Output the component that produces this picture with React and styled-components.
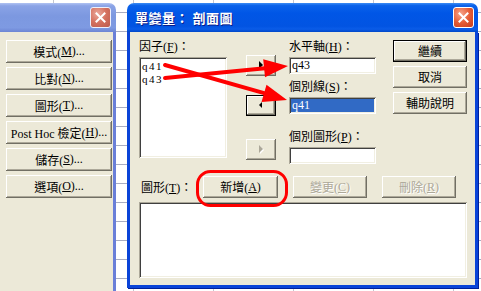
import React from 'react';
import styled, { createGlobalStyle, css } from 'styled-components';

const UI_FONT = `"Liberation Serif", "Noto Sans CJK TC", serif`;

const Global = createGlobalStyle`
  html, body { margin: 0; padding: 0; background: #fff; }
  body { font-family: ${UI_FONT}; font-size: 12px; }
`;

const Desktop = styled.div`
  position: relative;
  width: 481px;
  height: 291px;
  overflow: hidden;
  box-sizing: border-box;
  padding-top: 3px;
  display: flex;
  align-items: flex-start;
  background-color: #fff;
  background-image: linear-gradient(to right, #c4c6cf 1px, transparent 1px),
    linear-gradient(to bottom, #a9adc2 1px, transparent 1px);
  background-size: 80px 100%, 100% 19px;
  background-position: 53px 0, 0 12px;
  font-family: ${UI_FONT};
  font-size: 12px;
  color: #000;
`;

const Window = styled.div`
  flex: none;
  display: flex;
  flex-direction: column;
  width: ${(p) => p.$w}px;
  height: ${(p) => p.$h}px;
  margin-right: ${(p) => p.$mr || 0}px;
`;

const activeTitle = `linear-gradient(180deg, #3c8cf4 0%, #0b62ea 9%, #0056e6 35%, #0254e2 80%, #0a5ce8 90%, #0047c8 100%)`;
const inactiveTitle = `linear-gradient(180deg, #b0c2f2 0%, #8aa3e6 10%, #7c98e0 45%, #7e9ae2 85%, #6c85d4 100%)`;

const TitleBar = styled.div`
  flex: none;
  height: 29px;
  box-sizing: border-box;
  display: flex;
  align-items: center;
  padding: 0 ${(p) => (p.$active ? 4 : 5)}px 0 8px;
  border-radius: ${(p) => (p.$cut ? '0 7px 0 0' : '7px 7px 0 0')};
  background: ${(p) => (p.$active ? activeTitle : inactiveTitle)};
`;

const TitleText = styled.span`
  color: #fff;
  font-family: "Noto Sans CJK TC", sans-serif;
  font-weight: 700;
  font-size: 13px;
  letter-spacing: 0.5px;
  text-shadow: 1px 1px #0a1c8a;
  white-space: nowrap;
`;

const CloseBtn = styled.div`
  margin-left: auto;
  width: 21px;
  height: 21px;
  box-sizing: border-box;
  border: 1px solid ${(p) => (p.$active ? '#fff' : '#eef0fb')};
  border-radius: 3px;
  display: flex;
  align-items: center;
  justify-content: center;
  background: ${(p) =>
    p.$active
      ? 'radial-gradient(circle at 35% 30%, #f6a58c 0%, #e55c36 50%, #c53c1c 100%)'
      : 'radial-gradient(circle at 35% 30%, #eaa89c 0%, #d4705e 50%, #bb5a4c 100%)'};
`;

const Frame = styled.div`
  flex: 1;
  box-sizing: border-box;
  background: #ece9d8;
  border: 3px solid ${(p) => (p.$active ? '#0a44d8' : '#6a7fd8')};
  border-top: none;
  ${(p) => p.$cut && css`border-left: none;`}
  ${(p) => p.$active && css`box-shadow: 1px 1px 0 #00209a;`}
`;

const LeftBody = styled(Frame)`
  display: flex;
  flex-direction: column;
  gap: 4px;
  padding: 8px 1px 0 6px;
`;

const bevel = css`
  box-shadow: inset -1px -1px #716f64, inset 1px 1px #fff, inset -2px -2px #aca899;
`;
const defaultBevel = css`
  box-shadow: inset 0 0 0 1px #000, inset -2px -2px #716f64, inset 2px 2px #fff,
    inset -3px -3px #aca899;
`;

const Btn = styled.button`
  flex: none;
  box-sizing: border-box;
  display: flex;
  align-items: center;
  justify-content: center;
  padding: 0;
  border: none;
  margin: 0;
  margin-top: ${(p) => p.$mt || 0}px;
  width: ${(p) => (p.$w ? `${p.$w}px` : 'auto')};
  height: ${(p) => p.$h || 22}px;
  background: #ece9d8;
  font-family: ${UI_FONT};
  font-size: 12px;
  color: ${(p) => (p.disabled ? '#aca899' : '#000')};
  text-shadow: ${(p) => (p.disabled ? '1px 1px #fff' : 'none')};
  white-space: nowrap;
  ${(p) => (p.$default ? defaultBevel : bevel)}
`;

const U = styled.span`
  text-decoration: underline;
`;

const Dialog = styled(Frame)`
  display: flex;
  flex-direction: column;
  padding: 7px 8px 7px 9px;
`;

const TopSection = styled.div`
  display: flex;
  align-items: flex-start;
`;

const Col = styled.div`
  flex: none;
  display: flex;
  flex-direction: column;
  width: ${(p) => p.$w}px;
  margin-left: ${(p) => p.$ml || 0}px;
  padding-top: ${(p) => p.$pt || 0}px;
  gap: ${(p) => p.$gap || 0}px;
`;

const Label = styled.div`
  height: 16px;
  line-height: 16px;
  margin-bottom: 2px;
  white-space: nowrap;
`;

const Group = styled.div`
  display: flex;
  flex-direction: column;
  margin-top: ${(p) => p.$mt || 0}px;
`;

const sunken = css`
  box-sizing: border-box;
  background: #fff;
  box-shadow: inset 1px 1px #aca899, inset -1px -1px #fff, inset 2px 2px #3f3f3f,
    inset -2px -2px #f1efe2;
`;

const Field = styled.div`
  ${sunken}
  height: 17px;
  padding: 2px 2px;
  font-size: 12px;
  line-height: 13px;
`;

const FieldValue = styled.div`
  height: 13px;
  padding-left: 1px;
  background: ${(p) => (p.$selected ? '#316ac5' : 'transparent')};
  color: ${(p) => (p.$selected ? '#fff' : '#000')};
`;

const ListBox = styled.div`
  ${sunken}
  width: ${(p) => p.$w}px;
  height: ${(p) => p.$h}px;
  padding: 3px 3px;
  font-size: 11px;
  letter-spacing: 1.5px;
  line-height: 13px;
  margin-top: ${(p) => p.$mt || 0}px;
`;

const ListItem = styled.div`
  white-space: nowrap;
`;

const BottomRow = styled.div`
  display: flex;
  align-items: center;
  margin-top: 12px;
  padding-left: 2px;
`;

const BottomLabel = styled.div`
  width: 62px;
  flex: none;
  white-space: nowrap;
`;

const BtnRow = styled.div`
  display: flex;
  gap: 15px;
`;

const Overlay = styled.svg`
  position: absolute;
  left: 0;
  top: 0;
  pointer-events: none;
`;

const CloseX = () => (
  <svg width="11" height="11" viewBox="0 0 11 11">
    <path d="M1.5 1.5 L9.5 9.5 M9.5 1.5 L1.5 9.5" stroke="#fff" strokeWidth="2" strokeLinecap="square" />
  </svg>
);

const Tri = ({ dir, disabled }) => (
  <svg width="6" height="9" viewBox="0 0 6 9">
    {disabled && <polygon points="2,1 6,5 2,9" fill="#fff" />}
    {dir === 'right' ? (
      <polygon points="1,0 5,4 1,8" fill={disabled ? '#aca899' : '#000'} />
    ) : (
      <polygon points="4,1 1,4 4,7" fill="#000" />
    )}
  </svg>
);

export default function App() {
  return (
    <>
      <Global />
      <Desktop>
        <Window $w={116} $h={300} $mr={11}>
          <TitleBar $cut>
            <CloseBtn>
              <CloseX />
            </CloseBtn>
          </TitleBar>
          <LeftBody $cut>
            <Btn $h={23}>模式(<U>M</U>)...</Btn>
            <Btn $h={23}>比對(<U>N</U>)...</Btn>
            <Btn $h={23}>圖形(<U>T</U>)...</Btn>
            <Btn $h={23}>Post Hoc 檢定(<U>H</U>)...</Btn>
            <Btn $h={23}>儲存(<U>S</U>)...</Btn>
            <Btn $h={23}>選項(<U>O</U>)...</Btn>
          </LeftBody>
        </Window>

        <Window $w={351} $h={285}>
          <TitleBar $active>
            <TitleText>單變量： 剖面圖</TitleText>
            <CloseBtn $active>
              <CloseX />
            </CloseBtn>
          </TitleBar>
          <Dialog $active>
            <TopSection>
              <Col $w={88}>
                <Label>因子(<U>F</U>)：</Label>
                <ListBox $w={88} $h={101}>
                  <ListItem>q41</ListItem>
                  <ListItem>q43</ListItem>
                </ListBox>
              </Col>
              <Col $w={30} $ml={19}>
                <Btn $w={30} $h={21} $mt={16}>
                  <Tri dir="right" />
                </Btn>
                <Btn $w={30} $h={21} $mt={19} $default>
                  <Tri dir="left" />
                </Btn>
                <Btn $w={30} $h={21} $mt={23} disabled>
                  <Tri dir="right" disabled />
                </Btn>
              </Col>
              <Col $w={87} $ml={13}>
                <Group>
                  <Label>水平軸(<U>H</U>)：</Label>
                  <Field>
                    <FieldValue>q43</FieldValue>
                  </Field>
                </Group>
                <Group $mt={5}>
                  <Label>個別線(<U>S</U>)：</Label>
                  <Field>
                    <FieldValue $selected>q41</FieldValue>
                  </Field>
                </Group>
                <Group $mt={15}>
                  <Label>個別圖形(<U>P</U>)：</Label>
                  <Field>
                    <FieldValue />
                  </Field>
                </Group>
              </Col>
              <Col $w={74} $ml={17} $pt={1} $gap={4}>
                <Btn $w={74} $default>繼續</Btn>
                <Btn $w={74}>取消</Btn>
                <Btn $w={74}>輔助說明</Btn>
              </Col>
            </TopSection>
            <BottomRow>
              <BottomLabel>圖形(<U>T</U>)：</BottomLabel>
              <BtnRow>
                <Btn $w={75}>新增(<U>A</U>)</Btn>
                <Btn $w={74} disabled>變更(<U>C</U>)</Btn>
                <Btn $w={74} disabled>刪除(<U>R</U>)</Btn>
              </BtnRow>
            </BottomRow>
            <ListBox $w={328} $h={76} $mt={4} />
          </Dialog>
        </Window>

        <Overlay width="481" height="291" viewBox="0 0 481 291">
          <rect x="197.5" y="171.5" width="89" height="34" rx="13" ry="13" fill="none" stroke="#f00" strokeWidth="3" />
          <line x1="165" y1="65" x2="265" y2="93.3" stroke="#f00" strokeWidth="4" strokeLinecap="round" />
          <polygon points="287,100 266.5,84.7 261.5,101.9" fill="#f00" />
          <line x1="165" y1="78" x2="265" y2="68.3" stroke="#f00" strokeWidth="4" strokeLinecap="round" />
          <polygon points="288,66 265,77.3 263.2,59.3" fill="#f00" />
        </Overlay>
      </Desktop>
    </>
  );
}
